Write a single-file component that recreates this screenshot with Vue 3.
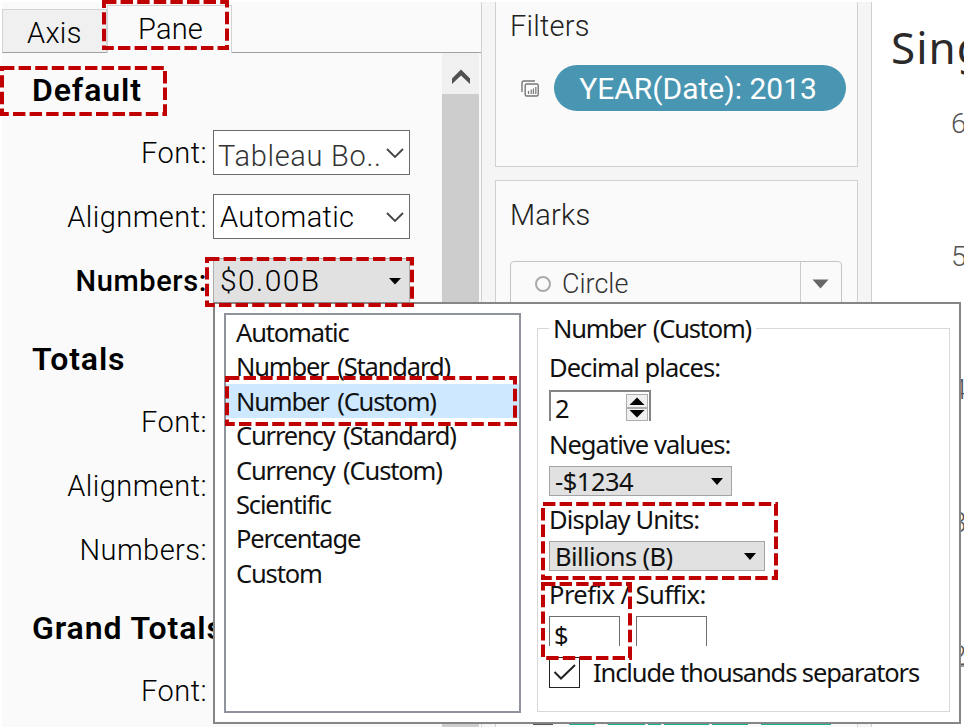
<script setup>
const sections = [
  {
    title: 'Default',
    rows: [
      { label: 'Font:', value: 'Tableau Bo..', kind: 'font' },
      { label: 'Alignment:', value: 'Automatic', kind: 'plain' },
      { label: 'Numbers:', value: '$0.00B', kind: 'active' },
    ],
  },
  { title: 'Totals', rows: [{ label: 'Font:' }, { label: 'Alignment:' }, { label: 'Numbers:' }] },
  { title: 'Grand Totals', rows: [{ label: 'Font:' }] },
]

const formats = [
  'Automatic',
  'Number (Standard)',
  'Number (Custom)',
  'Currency (Standard)',
  'Currency (Custom)',
  'Scientific',
  'Percentage',
  'Custom',
]
const selected = 'Number (Custom)'

const ticks = [6, 5, 4, 3, 2]

const highlights = [
  { x: 102, y: 0, w: 127, h: 50 },
  { x: 0, y: 66, w: 167, h: 50 },
  { x: 205, y: 257, w: 209, h: 50 },
  { x: 225, y: 376, w: 292, h: 50 },
  { x: 541, y: 502, w: 237, h: 78 },
  { x: 541, y: 582, w: 91, h: 78 },
]
</script>

<template>
  <div class="screen">
    <section class="format">
      <div class="tabs">
        <div class="tab axis"><span>Axis</span></div>
        <div class="tab pane"><span>Pane</span></div>
        <div class="tab-rest"></div>
      </div>
      <div class="format-body">
        <div class="settings">
          <div v-for="s in sections" :key="s.title" class="group">
            <h2>{{ s.title }}</h2>
            <div v-for="r in s.rows" :key="r.label" class="row">
              <span class="label" :class="{ strong: r.kind === 'active' }">{{ r.label }}</span>
              <div v-if="r.value" class="combo" :class="r.kind">
                <span>{{ r.value }}</span>
                <svg v-if="r.kind === 'active'" width="14" height="8" viewBox="0 0 14 8"><path d="M1 1H13L7 7.5Z" fill="#000" /></svg>
                <svg v-else width="18" height="10" viewBox="0 0 18 10"><path d="M1 1L9 9L17 1" fill="none" stroke="#444" stroke-width="1.8" /></svg>
              </div>
            </div>
          </div>
        </div>
        <div class="scroll">
          <div class="scroll-up">
            <svg width="18" height="16" viewBox="0 0 18 16"><path d="M0 9.5L9 0.5L18 9.5V15L9 6.5L0 15Z" fill="#505050" /></svg>
          </div>
          <div class="thumb"></div>
        </div>
      </div>
    </section>

    <section class="shelves">
      <div class="card filters">
        <div class="card-title">Filters</div>
        <div class="pill-row">
          <svg width="18" height="17" viewBox="0 0 18 17" fill="none" stroke="#777" stroke-width="1.4">
            <path d="M1 12V3Q1 1 3 1H14" />
            <rect x="4.2" y="4" width="13" height="12" rx="1.5" />
            <path d="M7.5 14V11M10.2 14V9.5M12.4 14V8.5M14.8 14V7" stroke-width="1.2" />
          </svg>
          <div class="pill"><span>YEAR(Date): 2013</span></div>
        </div>
      </div>
      <div class="card marks">
        <div class="card-title">Marks</div>
        <div class="mark-type">
          <i class="ring"></i>
          <span>Circle</span>
          <div class="mark-arrow">
            <svg width="17" height="10" viewBox="0 0 17 10"><path d="M0.5 0.5H16.5L8.5 9.5Z" fill="#666" /></svg>
          </div>
        </div>
        <svg class="mark-pill" width="320" height="3" viewBox="0 0 320 3">
          <path d="M22 2.5H42" stroke="#555" stroke-width="1.6" />
          <path d="M60 0H84V3H58ZM95 0H134V3H97ZM137 0H150V3H137ZM153 0H198V3H153ZM201 0H237V3H201ZM250 0H320V3H250Z" fill="#12b38c" />
        </svg>
      </div>
    </section>

    <section class="view">
      <div class="view-title">Sing</div>
      <div class="ticks">
        <div v-for="t in ticks" :key="t" class="tick">{{ t }}</div>
      </div>
      <div class="axis-line"></div>
    </section>

    <div class="popup">
      <div class="list">
        <div v-for="f in formats" :key="f" class="item" :class="{ on: f === selected }">{{ f }}</div>
      </div>
      <fieldset class="options">
        <legend>Number (Custom)</legend>
        <div class="caption first">Decimal places:</div>
        <div class="spin">
          <span>2</span>
          <div class="spin-buttons">
            <i><svg width="16" height="8" viewBox="0 0 16 8"><path d="M0.5 8L8 0.5L15.5 8Z" /></svg></i>
            <i><svg width="16" height="8" viewBox="0 0 16 8"><path d="M0.5 0L8 7.5L15.5 0Z" /></svg></i>
          </div>
        </div>
        <div class="caption">Negative values:</div>
        <div class="select short">
          <span>-$1234</span>
          <svg width="12" height="7" viewBox="0 0 12 7"><path d="M0 0H12L6 7Z" /></svg>
        </div>
        <div class="caption unit">Display Units:</div>
        <div class="select long">
          <span>Billions (B)</span>
          <svg width="12" height="7" viewBox="0 0 12 7"><path d="M0 0H12L6 7Z" /></svg>
        </div>
        <div class="caption affix">Prefix / Suffix:</div>
        <div class="inputs">
          <div class="input">$</div>
          <div class="input"></div>
        </div>
        <div class="check">
          <div class="box">
            <svg width="24" height="18" viewBox="0 0 24 18"><path d="M1.5 9L8 15.5L22 2" fill="none" stroke="#222" stroke-width="2" /></svg>
          </div>
          <span>Include thousands separators</span>
        </div>
      </fieldset>
    </div>

    <svg class="highlights" width="964" height="727" viewBox="0 0 964 727">
      <rect
        v-for="(h, i) in highlights"
        :key="i"
        :x="h.x + 2"
        :y="h.y + 2"
        :width="h.w - 4"
        :height="h.h - 4"
      />
    </svg>
  </div>
</template>

<style>
body {
  background: #fff;
  overflow: hidden;
}
</style>

<style scoped>
.screen {
  position: relative;
  box-sizing: border-box;
  display: flex;
  width: 964px;
  height: 727px;
  padding: 2px 0 0 2px;
  overflow: hidden;
  background: #fff;
  font-family: Roboto, "Liberation Sans", sans-serif;
  color: #000;
}
.screen * {
  box-sizing: border-box;
}
svg {
  display: block;
  flex: none;
}
span,
.item,
.caption {
  white-space: nowrap;
}

/* format pane */
.format {
  flex: none;
  width: 479px;
  height: 725px;
  background: #fafafa;
  overflow: hidden;
}
.tabs {
  display: flex;
  align-items: flex-end;
  height: 51px;
  font-size: 29px;
  font-weight: 300;
}
.tab {
  border: 1px solid #d4d4d4;
  line-height: 46px;
}
.tab.axis {
  width: 105px;
  height: 44px;
  padding-left: 24px;
  background: #f0f0f0;
  border-bottom-color: #a0a0a0;
  letter-spacing: 0.3px;
}
.tab.pane {
  width: 125px;
  height: 48px;
  padding-left: 30px;
  border-bottom: 0;
  letter-spacing: 0.2px;
}
.tab-rest {
  flex: 1;
  height: 49px;
  border-bottom: 1px solid #a0a0a0;
}
.format-body {
  display: flex;
  height: 674px;
}
.settings {
  width: 440px;
  padding-top: 8px;
}
.group {
  margin-bottom: 17px;
}
h2 {
  height: 60px;
  margin: 0;
  padding-left: 30px;
  line-height: 59px;
  font-size: 32px;
  font-weight: 600;
  letter-spacing: 0.9px;
  white-space: nowrap;
  color: #000;
}
.row {
  display: flex;
  align-items: center;
  height: 64px;
  gap: 6px;
}
.label {
  width: 205px;
  text-align: right;
  font-size: 29px;
  font-weight: 300;
  letter-spacing: 0.45px;
}
.label.strong {
  font-weight: 500;
  letter-spacing: 0.6px;
}
.combo {
  display: flex;
  align-items: center;
  justify-content: space-between;
  width: 197px;
  height: 45px;
  margin-top: -1px;
  padding: 0 5px 0 6px;
  border: 1px solid #6a6a6a;
  background: #fff;
  font-size: 29px;
  font-weight: 300;
  letter-spacing: 0.35px;
}
.combo.font {
  padding-left: 4px;
}
.combo.font span {
  margin-top: 6px;
  letter-spacing: 0.7px;
  color: #333;
}
.combo.active {
  padding-right: 7px;
  border-color: #adadad;
  background: #e1e1e1;
  font-size: 30px;
  letter-spacing: 1.4px;
}
.scroll {
  width: 37px;
  background: #f0f0f0;
}
.scroll-up {
  display: flex;
  justify-content: center;
  height: 41px;
  padding-top: 16px;
}
.thumb {
  height: 633px;
  background: #cdcdcd;
}

/* shelves */
.shelves {
  flex: none;
  width: 391px;
  height: 725px;
  padding: 0 13px;
  border: solid #d0d0d0;
  border-width: 0 1px;
  background: #f5f5f5;
  overflow: hidden;
}
.card {
  border: 1px solid #d0d0d0;
  background: #fafafa;
}
.filters {
  height: 165px;
  border-top: 0;
}
.marks {
  display: flex;
  flex-direction: column;
  height: 560px;
  margin-top: 13px;
}
.card-title {
  padding-left: 14px;
  font-size: 29px;
  font-weight: 300;
  line-height: 48px;
  letter-spacing: 0.2px;
  color: #222;
}
.marks .card-title {
  padding-top: 10px;
}
.pill-row {
  display: flex;
  align-items: center;
  gap: 15px;
  margin-top: 15px;
  padding-left: 25px;
}
.pill {
  flex: none;
  width: 292px;
  height: 46px;
  padding-right: 4px;
  border-radius: 23px;
  background: #4996b2;
  color: #fff;
  font-size: 30px;
  line-height: 47px;
  text-align: center;
}
.mark-type {
  display: flex;
  align-items: center;
  width: 332px;
  height: 45px;
  margin: 22px 0 0 14px;
  padding-left: 24px;
  border: 1px solid #c4c4c4;
  border-radius: 4px;
  font-size: 27px;
  font-weight: 300;
  color: #333;
}
.ring {
  width: 16px;
  height: 16px;
  margin-right: 11px;
  border: 2px solid #aaa;
  border-radius: 50%;
}
.mark-arrow {
  display: flex;
  align-items: center;
  align-self: stretch;
  width: 41px;
  margin-left: auto;
  padding-left: 11px;
  border-left: 1px solid #ccc;
}
.mark-pill {
  margin: 416px 0 0 15px;
}

/* chart view */
.view {
  flex: 1;
  min-width: 0;
  overflow: hidden;
  background: #fff;
}
.view-title {
  height: 94px;
  padding-left: 19px;
  line-height: 91px;
  font-family: "Noto Sans", "Liberation Sans", sans-serif;
  font-size: 44px;
  letter-spacing: 1px;
  color: #2a2a2a;
}
.ticks {
  height: 570px;
  margin-top: -39px;
  padding-left: 79px;
}
.tick {
  height: 133px;
  line-height: 133px;
  font-size: 28px;
  font-weight: 300;
  color: #555;
}
.axis-line {
  margin-top: 38px;
  border-top: 2px solid #999;
}

/* number format popup */
.popup {
  position: absolute;
  left: 213px;
  top: 302px;
  display: flex;
  gap: 16px;
  width: 748px;
  height: 422px;
  padding: 9px 9px 10px 9px;
  border: 2px solid #868686;
  background: #fff;
  font-family: "Noto Sans", "Liberation Sans", sans-serif;
  font-size: 25.5px;
  letter-spacing: -1.1px;
  color: #111;
}
.list {
  flex: none;
  width: 297px;
  height: 400px;
  border: 2px solid #8e939c;
}
.item {
  height: 34.4px;
  padding-left: 10px;
  line-height: 35.4px;
  letter-spacing: -1.15px;
  word-spacing: 3px;
}
.item.on {
  background: #cde8ff;
}
.options {
  width: 413px;
  height: 399px;
  margin: 0;
  padding: 0 0 0 11px;
  border: 1px solid #d8d8d8;
}
legend {
  height: 30px;
  margin-left: 0;
  padding: 0 5px 0 4px;
  line-height: 30px;
  letter-spacing: -1.2px;
  word-spacing: 2px;
}
.caption {
  height: 36px;
  margin-top: 5px;
  line-height: 36px;
  letter-spacing: -0.95px;
}
.caption.first {
  margin-top: 6px;
}
.spin {
  display: flex;
  justify-content: space-between;
  width: 102px;
  height: 31px;
  margin-top: 5px;
  padding: 2px 1px 0 4px;
  border: 2px solid #858585;
  border-bottom: 0;
  line-height: 28px;
}
.spin-buttons {
  display: flex;
  flex-direction: column;
  width: 22px;
}
.spin-buttons i {
  flex: 1;
  display: flex;
  align-items: center;
  justify-content: center;
  border: 1px solid #adadad;
  background: #f0f0f0;
}
.select {
  display: flex;
  align-items: center;
  justify-content: space-between;
  height: 30px;
  margin-top: 4px;
  padding: 0 8px 0 5px;
  border: 1px solid #a4a4a4;
  background: #e1e1e1;
  line-height: 28px;
  overflow: hidden;
}
.select.short {
  width: 183px;
  letter-spacing: -0.5px;
}
.select.long {
  width: 216px;
  letter-spacing: -0.6px;
}
.inputs {
  display: flex;
  gap: 16px;
  margin-top: 4px;
}
.input {
  width: 71px;
  height: 30px;
  padding-left: 4px;
  border: 1px solid #6e6e6e;
  border-bottom: 0;
  line-height: 36px;
  overflow: hidden;
}
.caption.unit {
  letter-spacing: -0.9px;
}
.caption.affix {
  letter-spacing: -0.55px;
}
.check {
  display: flex;
  align-items: center;
  gap: 13px;
  height: 32px;
  margin-top: 10px;
}
.box {
  display: flex;
  align-items: center;
  justify-content: center;
  width: 31px;
  height: 31px;
  border: 1px solid #222;
}

/* dashed callouts */
.highlights {
  position: absolute;
  left: 0;
  top: 0;
}
.highlights rect {
  fill: none;
  stroke: #c00000;
  stroke-width: 4;
  stroke-dasharray: 12.4 4.2;
}
</style>
